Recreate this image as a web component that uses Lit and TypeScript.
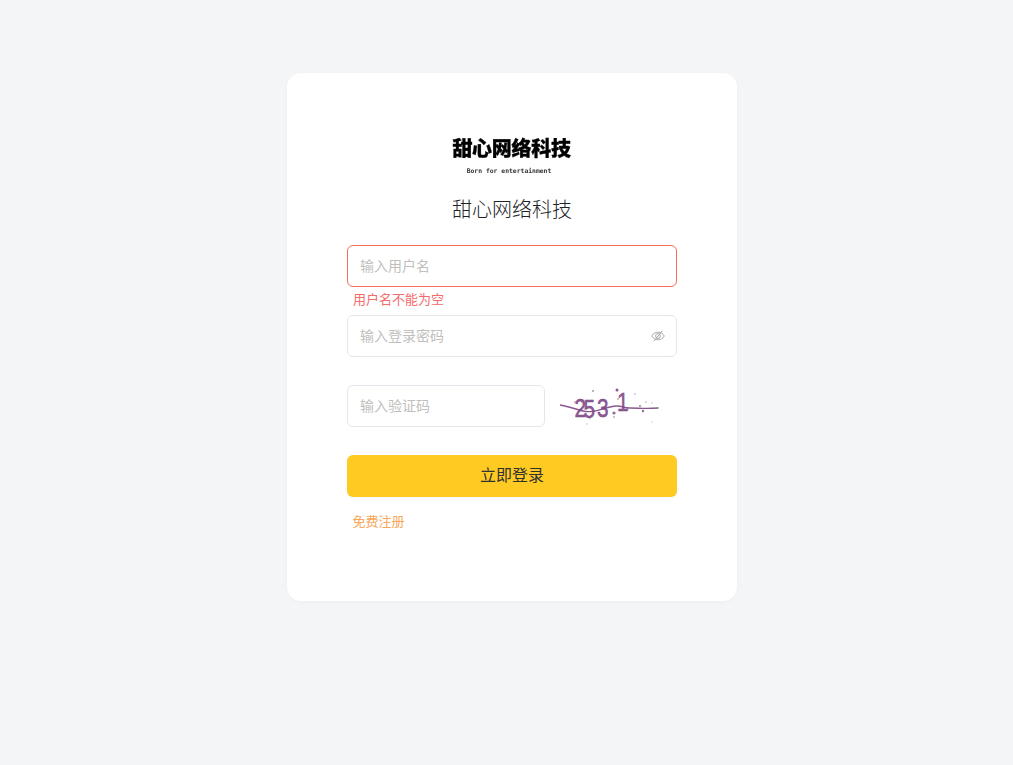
import { LitElement, html, css, svg } from "lit";
import { customElement } from "lit/decorators.js";

const dots: [number, number, number, number][] = [
  [40, 6, 1, .6], [64, 5, 1.5, .9], [65, 14, 1, .45], [82, 9, .9, .35], [93, 17, .8, .5], [99, 18, .8, .35],
  [87, 21, 1, .7], [90, 26, 1.2, .8], [61, 28, 1.6, .8], [61, 32, .9, .5], [37, 33, .9, .4], [34, 39, .7, .4],
  [99, 37, .7, .35], [29, 17, 1, .5], [22, 17, .9, .5], [105, 23, .8, .7], [75, 24, .8, .5],
];

@customElement("app-root")
export class AppRoot extends LitElement {
  static styles = css`
    :host {
      display: block;
      min-height: 100vh;
      background: #f4f5f7;
      font-family: "Noto Sans CJK SC", "Noto Sans", sans-serif;
      font-size: 14px;
      padding-top: 73px;
      box-sizing: border-box;
    }
    .card {
      width: 450px;
      height: 528px;
      margin-left: 287px;
      box-sizing: border-box;
      background: #fff;
      border-radius: 14px;
      box-shadow: 0 1px 4px rgba(0, 0, 0, 0.03);
      padding: 62px 60px 0;
    }
    .logo {
      display: flex;
      flex-direction: column;
      align-items: center;
      height: 42px;
      color: #000;
      padding-right: 1px;
    }
    .logo-cn {
      font-size: 20px;
      line-height: 26px;
      font-weight: 900;
      letter-spacing: -0.3px;
      -webkit-text-stroke: 0.3px #000;
      filter: blur(0.7px);
    }
    .logo-en {
      font-family: "DejaVu Sans Mono", monospace;
      font-size: 6.4px;
      line-height: 8px;
      margin-top: 6px;
      margin-right: 5px;
      color: #333;
      font-weight: 700;
      white-space: nowrap;
      filter: blur(0.4px);
    }
    h1 {
      margin: 17px 0 21px;
      font-size: 20px;
      line-height: 30px;
      font-weight: 300;
      text-align: center;
      color: #222326;
    }
    .field {
      height: 42px;
      box-sizing: border-box;
      border: 1px solid #e4e7ed;
      border-radius: 6px;
      padding: 0 11px 2px 12px;
      display: flex;
      align-items: center;
      justify-content: space-between;
      color: #c0bfbd;
      background: #fff;
    }
    .field.error {
      border-color: #f56c5c;
    }
    .msg {
      height: 28px;
      padding-left: 6px;
      font-size: 13px;
      line-height: 24px;
      color: #f56c6c;
    }
    .gap {
      height: 28px;
    }
    .row {
      display: flex;
      gap: 8px;
    }
    .row .field {
      width: 198px;
      flex: none;
    }
    .captcha {
      display: block;
      flex: none;
      overflow: visible;
    }
    .eye {
      display: block;
      margin-top: 2px;
    }
    .btn {
      height: 42px;
      border: none;
      border-radius: 6px;
      background: #ffca22;
      color: #303133;
      font: inherit;
      font-size: 16px;
      width: 100%;
      display: block;
      padding: 0 0 5px;
      margin-top: 28px;
      box-shadow: 0 1px 2px rgba(0, 0, 0, 0.04);
    }
    .reg {
      margin-top: 14px;
      padding-left: 5.5px;
      font-size: 13px;
      line-height: 20px;
      color: #f9a55a;
    }
  `;

  render() {
    return html`
      <div class="card">
        <div class="logo">
          <div class="logo-cn">甜心网络科技</div>
          <div class="logo-en">Born for entertainment</div>
        </div>
        <h1>甜心网络科技</h1>
        <div class="field error">输入用户名</div>
        <div class="msg">用户名不能为空</div>
        <div class="field">
          <span>输入登录密码</span>
          <svg class="eye" width="14" height="14" viewBox="0 0 14 14" fill="none" stroke="#a8a8a8" stroke-width="1">
            <path d="M.7 7C2.200 4.500 4.400 3.200 7 3.200s4.800 1.300 6.300 3.800c-1.500 2.500-3.700 3.800-6.300 3.800S2.200 9.500.7 7Z" />
            <circle cx="7" cy="7" r="2.400" />
            <path d="M2.800 12.300 11.500 1.700" />
          </svg>
        </div>
        <div class="gap"></div>
        <div class="row">
          <div class="field">输入验证码</div>
          <svg class="captcha" width="124" height="42" viewBox="0 0 124 42">
            <path d="M7 20C14 21 22 24 30 26S45 25 57 22 68 23 77 23 92 24 105 23" fill="none" stroke="#7d4585" stroke-width="1.400" stroke-opacity="0.9" />
            <text transform="scale(.8 1)" x="27 38 55 80" y="32 33 32 26" font-family="Liberation Sans, sans-serif" font-size="26" fill="#7d4585" stroke="#7d4585" stroke-width="0.5" fill-opacity="0.9">2531</text>
            ${dots.map(([x, y, r, o]) => svg`<circle cx=${x} cy=${y} r=${r} fill="#7d4585" fill-opacity=${o} />`)}
          </svg>
        </div>
        <button class="btn">立即登录</button>
        <div class="reg">免费注册</div>
      </div>
    `;
  }
}
